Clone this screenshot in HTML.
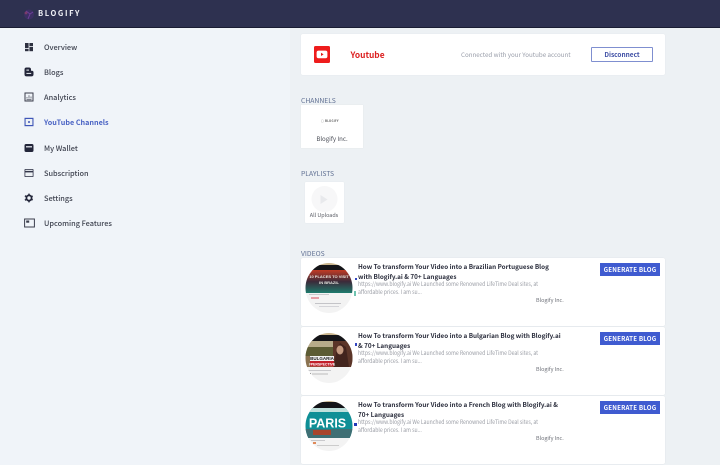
<!DOCTYPE html>
<html><head><meta charset="utf-8">
<style>
*{box-sizing:border-box}
html,body{margin:0;padding:0}
body{width:720px;height:465px;overflow:hidden;background:#edf1f4;font-family:"Liberation Sans","Noto Sans CJK JP",sans-serif;position:relative}
#w{position:absolute;left:0;top:0;width:720px;height:465px;filter:blur(.25px)}
.a,.n{font-family:"Noto Sans CJK JP","Liberation Sans",sans-serif}
.a{position:absolute;white-space:nowrap}
.hdr{left:0;top:0;width:720px;height:28px;background:#2e3150;border-bottom:1px solid #1a1d33}
.nav{left:44px;font-size:7.350px;color:#3f4350;line-height:12px;font-weight:500}
.ic{position:absolute;left:24px;width:10px;height:10px}
.lab{left:301px;font-size:6.800px;color:#5f6f92;line-height:9px}
.card{background:#fff;left:301px;width:364px;height:68px;border-radius:2px;box-shadow:0 0 1px #d5d9dd}
.t{left:358px;font-size:6.330px;font-weight:700;color:#2a2d3c;line-height:9.500px}
.d{left:358px;font-size:5.700px;color:#9a9da5;line-height:8px;transform:scaleX(.9);transform-origin:0 0}
.o{left:536px;font-size:5.400px;color:#6d7078;line-height:8px}
.b{left:600px;width:60px;height:13px;background:#3f5bd0;color:#fff;font-size:6.200px;font-weight:700;line-height:13px;text-align:center;letter-spacing:.2px}
</style></head><body><div id="w">
<div class="a" style="left:0;top:28px;width:290px;height:437px;background:#f0f4f9"></div>
<div class="a hdr"></div>
<svg class="a" style="left:23px;top:8px" width="12" height="13" viewBox="0 0 12 13"><circle cx="6" cy="6.500" r="5" fill="#3c2f63"/><path d="M3 3l4 3-2 5M7 6l3-2" stroke="#6d3f9a" fill="none"/><circle cx="3" cy="5" r="1.400" fill="#7b3b6a"/></svg>
<div class="a" style="left:38px;top:9px;font-size:7.600px;font-weight:700;color:#f1f2f6;letter-spacing:1.600px;line-height:10px">BLOGIFY</div>

<svg class="ic" style="top:42px" viewBox="0 0 10 10" fill="#2d3040"><rect x="1" y="1" width="3.600" height="5"/><rect x="5.400" y="1" width="3.600" height="3"/><rect x="1" y="6.800" width="3.600" height="2.400"/><rect x="5.400" y="4.800" width="3.600" height="4.400"/></svg>
<div class="a nav" style="top:42px">Overview</div>
<svg class="ic" style="top:67px" viewBox="0 0 10 10"><path d="M.5 2.500a2 2 0 0 1 2-2H5a2 2 0 0 1 2 2v1.200h.8a1.700 1.700 0 0 1 1.700 1.700v2a2 2 0 0 1-2 2h-5a2 2 0 0 1-2-2z" fill="#23263a"/><rect x="2.400" y="2.600" width="2.600" height="1" fill="#edf1f5"/><rect x="2.400" y="5.900" width="4.800" height="1" fill="#edf1f5"/></svg>
<div class="a nav" style="top:67px">Blogs</div>
<svg class="ic" style="top:92px" viewBox="0 0 10 10"><rect x="1" y="1" width="8" height="8" fill="none" stroke="#3a3d4c" stroke-width="1"/><path d="M3 6.500V5M5 6.500V3.200M7 6.500V4.500M2.500 7.700h5" stroke="#5a5d6a" stroke-width=".8"/></svg>
<div class="a nav" style="top:92px">Analytics</div>
<svg class="ic" style="top:117px" viewBox="0 0 10 10"><rect x=".5" y=".8" width="9" height="8.400" fill="#3f56b8"/><rect x="1.600" y="2" width="6.800" height="6" fill="#edf1f5"/><circle cx="5" cy="5" r="1" fill="#3f56b8"/></svg>
<div class="a nav" style="top:116.500px;color:#4a63c4;font-weight:700;font-size:7.200px">YouTube Channels</div>
<svg class="ic" style="top:143px" viewBox="0 0 10 10"><rect x=".5" y="1" width="9" height="8" rx="1.600" fill="#23263a"/><rect x="2" y="3" width="6" height="1.500" fill="#c8cbd4"/></svg>
<div class="a nav" style="top:143px">My Wallet</div>
<svg class="ic" style="top:168px" viewBox="0 0 10 10"><rect x=".5" y="1" width="9" height="8" rx=".8" fill="#33364a"/><rect x="1.300" y="1.800" width="7.400" height="1.100" fill="#edf1f5"/><rect x="1.300" y="4.400" width="7.400" height="3.800" fill="#edf1f5"/></svg>
<div class="a nav" style="top:167.500px">Subscription</div>
<svg class="ic" style="top:193px" viewBox="0 0 10 10"><circle cx="5" cy="5" r="2.600" fill="none" stroke="#23263a" stroke-width="1.800"/><path d="M5 .6v8.800M.9 2.800l8.200 4.400M.9 7.200l8.200-4.400" stroke="#23263a" stroke-width="1.500" stroke-dasharray="1.700 5.400"/></svg>
<div class="a nav" style="top:193px">Settings</div>
<svg class="ic" style="top:218px;width:11px;left:23.500px" viewBox="0 0 11 10"><rect x=".6" y="1" width="9.800" height="8" fill="none" stroke="#3a3d4c" stroke-width="1"/><rect x="2.200" y="2.500" width="3" height="2.200" fill="#3a3d4c"/></svg>
<div class="a nav" style="top:217.500px">Upcoming Features</div>

<div class="a" style="left:301px;top:34px;width:364px;height:41px;background:#fff;border-radius:2px;box-shadow:0 0 1px #dde0e4"></div>
<svg class="a" style="left:314px;top:46px" width="16" height="17" viewBox="0 0 16 17"><rect width="16" height="17" rx="1.500" fill="#ee1c1c"/><rect x="2.600" y="4.600" width="10.800" height="7.600" rx="2" fill="#fff"/><path d="M7 6.800l2.600 1.600L7 10z" fill="#e01818"/></svg>
<div class="a" style="left:350.500px;top:48.500px;font-size:8.400px;font-weight:700;color:#dc2020;line-height:12px">Youtube</div>
<div class="a" style="left:461px;top:50px;font-size:6.200px;color:#9a9eaa;line-height:10px">Connected with your Youtube account</div>
<div class="a" style="left:591px;top:47px;width:62px;height:15px;border:1px solid #7f8fd0;border-radius:1px;background:#fff;text-align:center;font-size:6.500px;font-weight:700;color:#3f4fa5;line-height:13px">Disconnect</div>

<div class="a lab" style="top:96px">CHANNELS</div>
<div class="a" style="left:301px;top:105px;width:62px;height:43px;background:#fff;box-shadow:0 0 1px #dde0e4"></div>
<div class="a" style="left:321px;top:119px;font-size:2.800px;font-weight:700;color:#555;letter-spacing:.3px;line-height:4px">&#9675; BLOGIFY</div>
<div class="a" style="left:301px;top:134px;width:62px;text-align:center;font-size:6.100px;color:#4c4f58;line-height:10px">Blogify Inc.</div>

<div class="a lab" style="top:169px">PLAYLISTS</div>
<div class="a" style="left:305px;top:182px;width:39px;height:41px;background:#fff;border-radius:1px;box-shadow:0 0 1px #dde0e4"></div>
<svg class="a" style="left:310px;top:185px" width="30" height="28" viewBox="0 0 30 28"><circle cx="14.500" cy="14" r="13" fill="#f7f7f8"/><path d="M10.500 10l7 4.500-7 4.500z" fill="#e8e9ec"/></svg>
<div class="a" style="left:305px;top:211px;width:38px;text-align:center;font-size:5.400px;color:#5b5e66;line-height:8px">All Uploads</div>

<div class="a lab" style="top:249px">VIDEOS</div>

<div class="a card" style="top:258px"></div>
<div class="a card" style="top:327px"></div>
<div class="a card" style="top:396px"></div>

<svg class="a" style="left:305px;top:261px" width="48" height="54" viewBox="0 0 48 54">
<defs><clipPath id="c1"><ellipse cx="24" cy="27" rx="23.500" ry="25"/></clipPath>
<linearGradient id="g1" x1="0" y1="0" x2="0" y2="1"><stop offset="0" stop-color="#c23b24"/><stop offset=".5" stop-color="#3c2a3a"/><stop offset="1" stop-color="#1e7a6c"/></linearGradient></defs>
<g clip-path="url(#c1)"><rect width="48" height="54" fill="#f3f3f3"/><rect width="48" height="5" y="1" fill="#c9b48c"/><rect width="48" height="6" y="4" fill="#141418"/><rect y="9" width="48" height="23" fill="url(#g1)"/><rect y="33" x="4" width="20" height="1" fill="#c9c9cc"/><rect y="36" x="6" width="8" height="2" fill="#e5a0a8"/><rect y="42" x="10" width="26" height="1" fill="#c4c4c8"/><rect y="45" x="14" width="20" height="1" fill="#d4d4d8"/></g>
<text x="24" y="17" text-anchor="middle" font-family="Liberation Sans" font-size="4" font-weight="700" fill="#e8e8e0">10 PLACES TO VISIT</text>
<text x="24" y="23" text-anchor="middle" font-family="Liberation Sans" font-size="4" font-weight="700" fill="#e8e8e0">IN BRAZIL</text>
</svg>
<svg class="a" style="left:305px;top:331px" width="48" height="54" viewBox="0 0 48 54">
<defs><clipPath id="c2"><ellipse cx="24" cy="27" rx="23.500" ry="25"/></clipPath></defs>
<g clip-path="url(#c2)"><rect width="48" height="54" fill="#f3f3f3"/><rect width="48" height="5" y="1" fill="#c9b48c"/><rect width="48" height="6" y="4" fill="#141418"/><rect y="10" width="48" height="26" fill="#8a7250"/><rect y="10" width="30" height="8" fill="#b7ab8a"/><rect y="16" width="30" height="9" fill="#5c5c34"/><rect x="28" y="10" width="20" height="26" fill="#5b3528"/><path d="M29 36l2-14 4-10 6 4 3 20z" fill="#3a1f1a" opacity=".75"/><ellipse cx="35" cy="19" rx="3.500" ry="4.500" fill="#c49a80"/><rect x="5" y="25" width="24" height="5" fill="#f2f2f2"/><rect x="5" y="30" width="24" height="5.500" fill="#c21f2b"/><rect x="2" y="39" width="24" height="1" fill="#c9c9cc"/><rect x="3" y="42" width="3" height="2" fill="#333"/><rect x="7" y="42.500" width="16" height="1" fill="#bbb"/></g>
<text x="17" y="29" text-anchor="middle" font-family="Liberation Sans" font-size="4.500" font-weight="700" fill="#222">BULGARIA</text>
<text x="17" y="34.500" text-anchor="middle" font-family="Liberation Sans" font-size="3.500" font-weight="700" fill="#fff">#PERSPECTIVE</text>
</svg>
<svg class="a" style="left:305px;top:399px" width="48" height="54" viewBox="0 0 48 54">
<defs><clipPath id="c3"><ellipse cx="24" cy="27" rx="23.500" ry="25"/></clipPath></defs>
<g clip-path="url(#c3)"><rect width="48" height="54" fill="#f3f3f3"/><rect width="48" height="4" y="0" fill="#c9b48c"/><rect width="48" height="7" y="3" fill="#141418"/><rect y="9" width="48" height="30" fill="#0f8f96"/><rect y="9" width="48" height="4" fill="#bfe0dc"/><rect y="30" width="48" height="9" fill="#3f6f74"/><rect x="8" y="31" width="18" height="5" fill="#a8452c"/><rect x="6" y="41" width="14" height="1" fill="#c9c9cc"/><rect x="8" y="43" width="3" height="2" fill="#e08a5a"/><rect x="12" y="46" width="22" height="1" fill="#ccc"/></g>
<text x="22.500" y="28.500" text-anchor="middle" font-family="Liberation Sans" font-size="12.500" font-weight="700" fill="#fff">PARIS</text>
</svg>

<div class="a" style="left:355px;top:278px;width:2px;height:2px;background:#3346c0"></div>
<div class="a" style="left:354px;top:291px;width:1.500px;height:5px;background:#6fc4b0"></div>
<div class="a" style="left:355px;top:343px;width:2px;height:3px;background:#3346c0"></div>
<div class="a" style="left:354px;top:423px;width:3px;height:3px;background:#2238b8"></div>

<div class="a t" style="top:262px">How To transform Your Video into a Brazilian Portuguese Blog<br>with Blogify.ai &amp; 70+ Languages</div>
<div class="a d" style="top:280px">https://www.blogify.ai We Launched some Renowned LifeTime Deal sites, at<br>affordable prices. I am su...</div>
<div class="a o" style="top:296px">Blogify Inc.</div>
<div class="a b" style="top:263px">GENERATE BLOG</div>

<div class="a t" style="top:331px">How To transform Your Video into a Bulgarian Blog with Blogify.ai<br>&amp; 70+ Languages</div>
<div class="a d" style="top:349px">https://www.blogify.ai We Launched some Renowned LifeTime Deal sites, at<br>affordable prices. I am su...</div>
<div class="a o" style="top:365px">Blogify Inc.</div>
<div class="a b" style="top:332px">GENERATE BLOG</div>

<div class="a t" style="top:400px">How To transform Your Video into a French Blog with Blogify.ai &amp;<br>70+ Languages</div>
<div class="a d" style="top:418px">https://www.blogify.ai We Launched some Renowned LifeTime Deal sites, at<br>affordable prices. I am su...</div>
<div class="a o" style="top:434px">Blogify Inc.</div>
<div class="a b" style="top:401px">GENERATE BLOG</div>
</div></body></html>
